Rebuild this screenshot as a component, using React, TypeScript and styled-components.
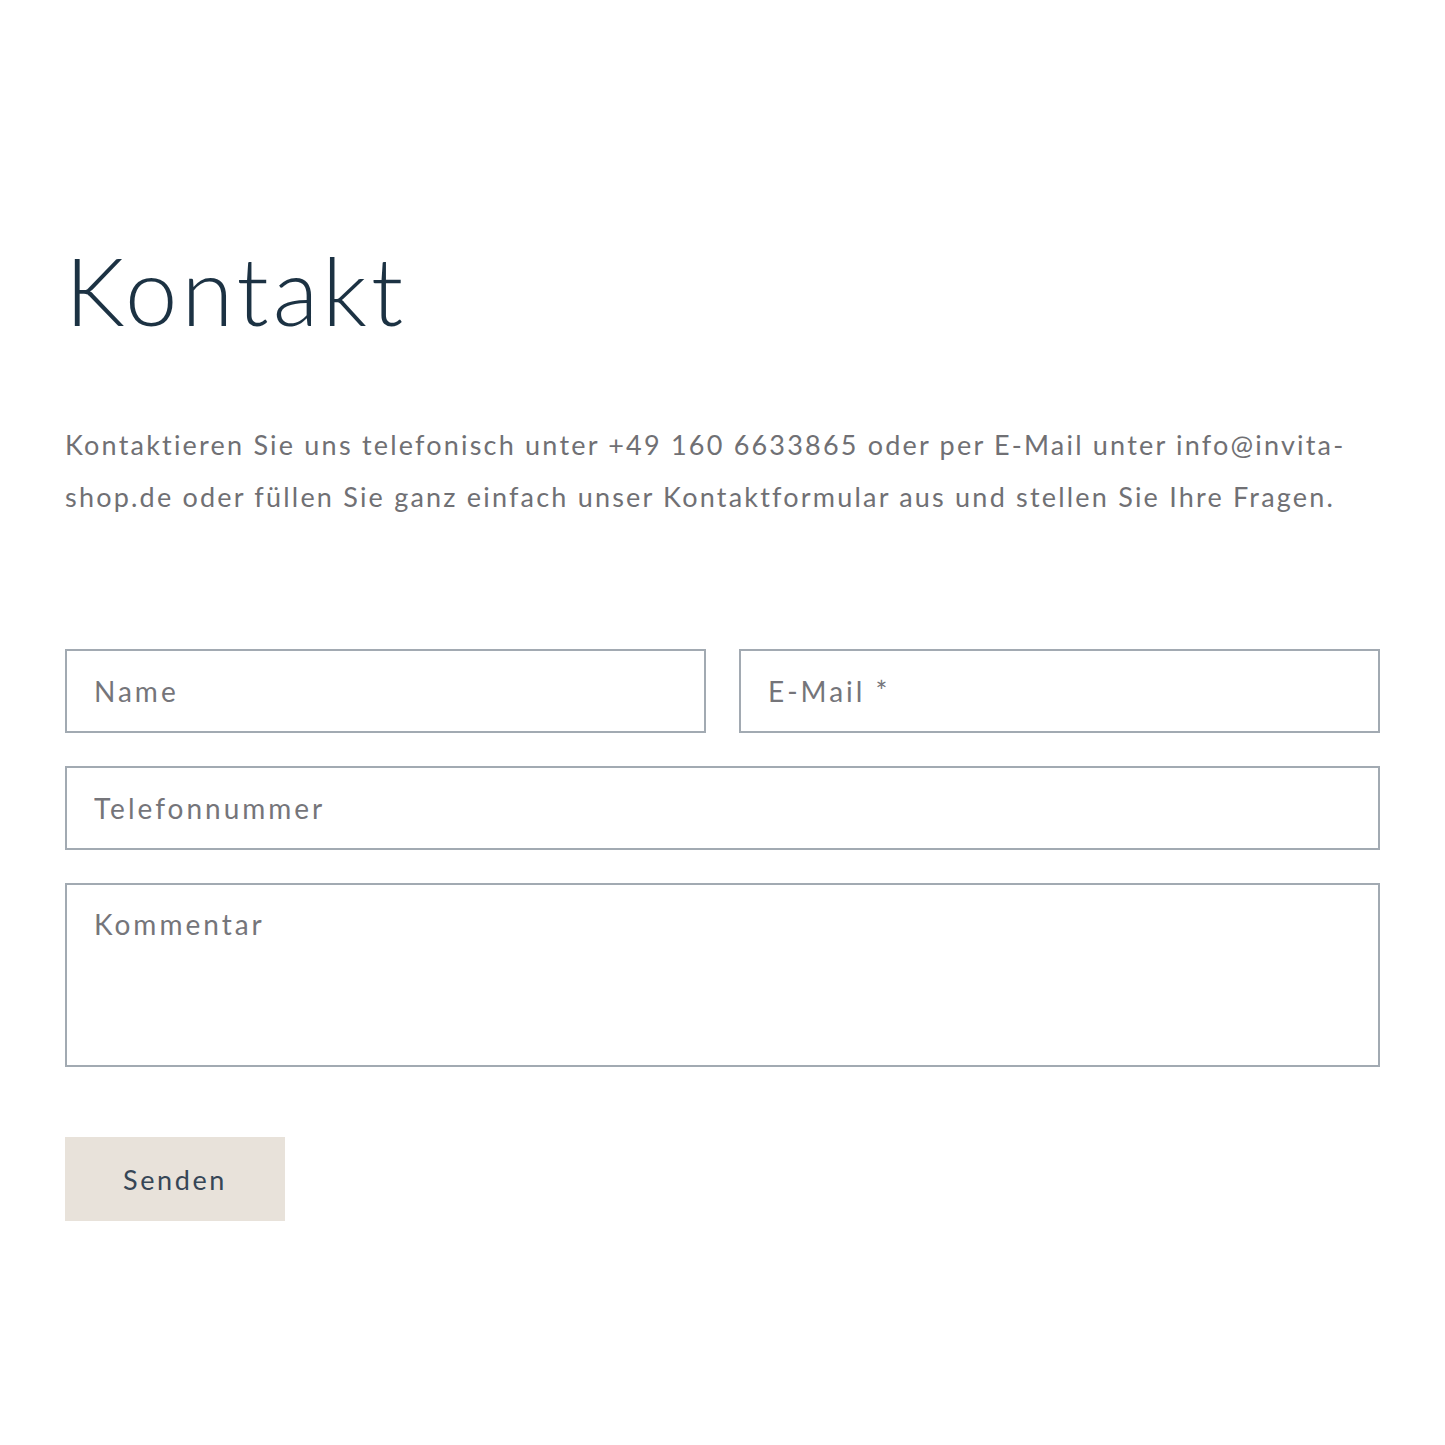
import React from 'react';
import styled, { createGlobalStyle } from 'styled-components';

const GlobalStyle = createGlobalStyle`
  html, body {
    margin: 0;
    padding: 0;
    background: #ffffff;
  }

  body {
    font-family: 'Lato', 'Open Sans', sans-serif;
  }
`;

const Page = styled.main`
  box-sizing: border-box;
  width: 1445px;
  min-height: 1445px;
  padding: 232px 65px 0 65px;
`;

const Wrapper = styled.div`
  width: 1315px;
`;

const Title = styled.h1`
  margin: 0;
  font-family: 'Lato', sans-serif;
  font-weight: 300;
  font-size: 94px;
  line-height: 116px;
  letter-spacing: 4px;
  color: #1c3243;
`;

const Intro = styled.p`
  margin: 71px 0 0 0;
  font-size: 27px;
  line-height: 52px;
  letter-spacing: 2.2px;
  color: #707074;
`;

const Form = styled.form`
  display: grid;
  grid-template-columns: 1fr 1fr;
  gap: 33px;
  margin-top: 126px;
`;

const Field = styled.input<{ $wide?: boolean }>`
  box-sizing: border-box;
  grid-column: ${({ $wide }) => ($wide ? '1 / span 2' : 'auto')};
  height: 84px;
  padding: 0 27px;
  border: 2px solid #a2aab2;
  border-radius: 0;
  background: #fff;
  font-family: inherit;
  font-size: 28px;
  letter-spacing: 3px;
  color: #1c3243;
  outline: none;

  &::placeholder {
    color: #75757a;
  }
`;

const Comment = styled.textarea`
  box-sizing: border-box;
  grid-column: 1 / span 2;
  height: 184px;
  padding: 20px 27px;
  border: 2px solid #a2aab2;
  border-radius: 0;
  resize: none;
  font-family: inherit;
  font-size: 28px;
  line-height: 38px;
  letter-spacing: 3px;
  outline: none;

  &::placeholder {
    color: #75757a;
  }
`;

const Actions = styled.div`
  grid-column: 1 / span 2;
  margin-top: 37px;
`;

const SubmitButton = styled.button`
  width: 220px;
  height: 84px;
  border: none;
  border-radius: 0;
  background: #e8e2da;
  font-family: inherit;
  font-size: 27px;
  letter-spacing: 2.6px;
  color: #364656;
  cursor: pointer;
`;

const App: React.FC = () => {
  return (
    <>
      <GlobalStyle />
      <Page>
        <Wrapper>
          <Title>Kontakt</Title>
          <Intro>
            Kontaktieren Sie uns telefonisch unter +49 160 6633865 oder per E-Mail unter info@invita-shop.de oder füllen Sie ganz einfach unser Kontaktformular aus und stellen Sie Ihre Fragen.
          </Intro>
          <Form onSubmit={(e) => e.preventDefault()}>
            <Field placeholder='Name' type='text' />
            <Field placeholder='E-Mail *' type='email' />
            <Field $wide placeholder='Telefonnummer' type='tel' />
            <Comment placeholder='Kommentar' />
            <Actions>
              <SubmitButton type='submit'>Senden</SubmitButton>
            </Actions>
          </Form>
        </Wrapper>
      </Page>
    </>
  );
};

export default App;
